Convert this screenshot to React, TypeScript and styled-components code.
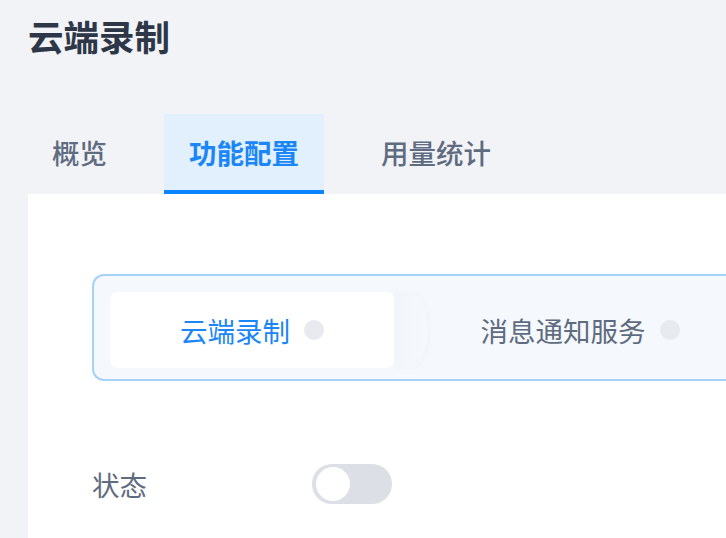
import React from "react";
import styled, { createGlobalStyle } from "styled-components";

const Global = createGlobalStyle`
  html, body { margin: 0; padding: 0; background: #f2f3f7; overflow: hidden; }
  body { font-family: "Noto Sans CJK SC", "Noto Sans", sans-serif; }
  * { box-sizing: border-box; }
`;

const Page = styled.div`
  width: 726px;
  height: 538px;
  display: flex;
  flex-direction: column;
  background: #f2f3f7;
  overflow: hidden;
`;

const Title = styled.h1`
  margin: 0;
  padding: 13px 0 0 28px;
  height: 114px;
  font-size: 35.5px;
  line-height: 46px;
  font-weight: 700;
  color: #2d3748;
`;

const Tabs = styled.div`
  display: flex;
  gap: 32px;
  padding-left: 27px;
  height: 80px;
`;

const Tab = styled.div<{ $active?: boolean }>`
  height: 80px;
  padding: 0 25px;
  display: flex;
  align-items: center;
  font-size: 27.5px;
  font-weight: ${(p) => (p.$active ? 700 : 500)};
  color: ${(p) => (p.$active ? "#1a86f7" : "#5f6b80")};
  background: ${(p) => (p.$active ? "#e2f0fe" : "transparent")};
  border-bottom: 4px solid ${(p) => (p.$active ? "#0a84ff" : "transparent")};
`;

const Panel = styled.div`
  flex: 1;
  margin-left: 28px;
  background: #ffffff;
  padding: 80px 0 0 64px;
  display: flex;
  flex-direction: column;
  overflow: hidden;
`;

const Segmented = styled.div`
  display: flex;
  gap: 44px;
  width: 700px;
  flex-shrink: 0;
  border: 2px solid #a6d1f9;
  border-right: none;
  border-radius: 12px 0 0 12px;
  background: #f5f8fc;
  padding: 16px 16px 11px;
`;

const Segment = styled.div<{ $active?: boolean }>`
  position: relative;
  flex: 0 0 284px;
  height: 76px;
  border-radius: 8px;
  display: flex;
  align-items: center;
  justify-content: center;
  gap: 14px;
  font-size: 27.5px;
  color: ${(p) => (p.$active ? "#1a86f7" : "#5f6b80")};
  background: ${(p) => (p.$active ? "#ffffff" : "transparent")};
  ${(p) =>
    p.$active &&
    `
    &::after {
      content: "";
      position: absolute;
      top: 0;
      right: -34px;
      width: 34px;
      height: 76px;
      border-radius: 0 50% 50% 0 / 0 50% 50% 0;
      background: linear-gradient(90deg, rgba(238,241,246,0.5), rgba(245,248,252,0));
      box-shadow: 2px 0 3px rgba(236,239,245,0.35);
    }
  `}
`;

const Dot = styled.span`
  width: 20px;
  height: 20px;
  border-radius: 50%;
  background: #e8eaef;
`;

const Row = styled.div`
  display: flex;
  align-items: center;
  margin-top: 83px;
`;

const Label = styled.div`
  width: 220px;
  font-size: 27.5px;
  color: #5f6b80;
`;

const Toggle = styled.div`
  width: 80px;
  height: 40px;
  border-radius: 20px;
  background: #dcdfe6;
  padding: 3px 4px;
  display: flex;
  align-items: center;
`;

const Knob = styled.div`
  width: 34px;
  height: 34px;
  border-radius: 50%;
  background: #ffffff;
`;

export default function App() {
  return (
    <Page>
      <Global />
      <Title>云端录制</Title>
      <Tabs>
        <Tab>概览</Tab>
        <Tab $active>功能配置</Tab>
        <Tab>用量统计</Tab>
      </Tabs>
      <Panel>
        <Segmented>
          <Segment $active>
            云端录制
            <Dot />
          </Segment>
          <Segment>
            消息通知服务
            <Dot />
          </Segment>
        </Segmented>
        <Row>
          <Label>状态</Label>
          <Toggle>
            <Knob />
          </Toggle>
        </Row>
      </Panel>
    </Page>
  );
}
